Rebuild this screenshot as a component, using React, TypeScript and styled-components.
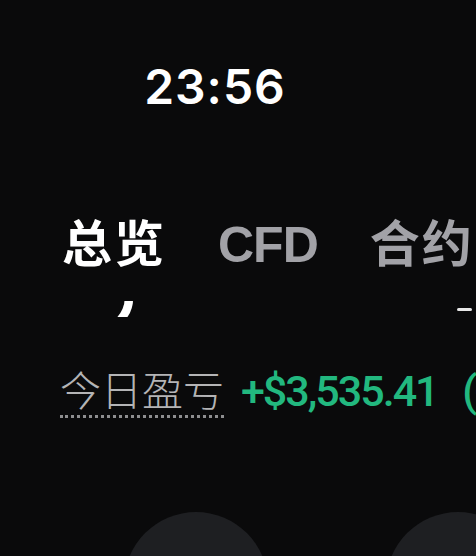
import React from "react";
import styled, { createGlobalStyle } from "styled-components";

const Global = createGlobalStyle`
  html, body {
    margin: 0;
    padding: 0;
    background: #0a0a0b;
    height: 556px;
    overflow: hidden;
  }
  * { box-sizing: border-box; }
`;

const Screen = styled.div`
  display: flex;
  flex-direction: column;
  width: 476px;
  height: 556px;
  overflow: hidden;
  background: #0a0a0b;
  font-family: "Liberation Sans", "Noto Sans CJK SC", sans-serif;
`;

const StatusBar = styled.div`
  display: flex;
  flex-shrink: 0;
  padding-top: 62px;
`;

const Time = styled.div`
  width: 430px;
  text-align: center;
  font-family: Inter, "Liberation Sans", sans-serif;
  font-weight: 600;
  font-size: 48px;
  line-height: 49px;
  letter-spacing: 1px;
  color: #ffffff;
`;

const TabBar = styled.div`
  display: flex;
  flex-shrink: 0;
  gap: 52px;
  margin-top: 109px;
  padding-left: 62px;
  white-space: nowrap;
`;

const Tab = styled.div<{ $active?: boolean }>`
  font-size: 50px;
  line-height: 51px;
  font-weight: 700;
  letter-spacing: -1px;
  color: ${(p) => (p.$active ? "#ffffff" : "#a2a2a7")};
  flex-shrink: 0;
`;

const CjkTab = styled(Tab)`
  font-size: 50px;
  letter-spacing: 2px;
`;

const ClipRow = styled.div`
  display: flex;
  flex-shrink: 0;
  align-items: flex-start;
  height: 20px;
  margin-top: 30px;
  overflow: hidden;
  padding-left: 110px;
  padding-right: 4px;
`;

const HiddenFigure = styled.span`
  font-size: 110px;
  line-height: 110px;
  font-weight: 700;
  color: #ffffff;
  margin-top: -94px;
`;

const HiddenBar = styled.div`
  margin-left: auto;
  margin-top: 7px;
  width: 15px;
  height: 3px;
  border-radius: 1.5px;
  background: #e8e8e8;
`;

const PnlRow = styled.div`
  display: flex;
  flex-shrink: 0;
  align-items: baseline;
  gap: 17px;
  margin-top: 46px;
  padding-left: 60px;
  white-space: nowrap;
`;

const PnlLabel = styled.span`
  font-family: "Noto Sans CJK SC", sans-serif;
  font-weight: 300;
  font-size: 41px;
  line-height: 42px;
  color: #b4b4b6;
  padding-bottom: 6px;
  border-bottom: 3px dotted #8e8e90;
  flex-shrink: 0;
`;

const PnlValue = styled.span`
  font-family: Roboto, "Liberation Sans", sans-serif;
  font-weight: 500;
  font-size: 43px;
  line-height: 42px;
  letter-spacing: -2px;
  word-spacing: 16px;
  color: #22b87f;
  flex-shrink: 0;
`;

const ActionRow = styled.div`
  display: flex;
  flex-shrink: 0;
  gap: 118px;
  margin-top: 94px;
  padding-left: 124px;
`;

const ActionCircle = styled.div`
  flex-shrink: 0;
  width: 144px;
  height: 144px;
  border-radius: 50%;
  background: #1e1f22;
`;

export default function App() {
  return (
    <>
      <Global />
      <Screen>
        <StatusBar>
          <Time>23:56</Time>
        </StatusBar>
        <TabBar>
          <CjkTab $active>总览</CjkTab>
          <Tab>CFD</Tab>
          <CjkTab>合约</CjkTab>
        </TabBar>
        <ClipRow>
          <HiddenFigure>,</HiddenFigure>
          <HiddenBar />
        </ClipRow>
        <PnlRow>
          <PnlLabel>今日盈亏</PnlLabel>
          <PnlValue>+$3,535.41 (+0.82%)</PnlValue>
        </PnlRow>
        <ActionRow>
          <ActionCircle />
          <ActionCircle />
        </ActionRow>
      </Screen>
    </>
  );
}
